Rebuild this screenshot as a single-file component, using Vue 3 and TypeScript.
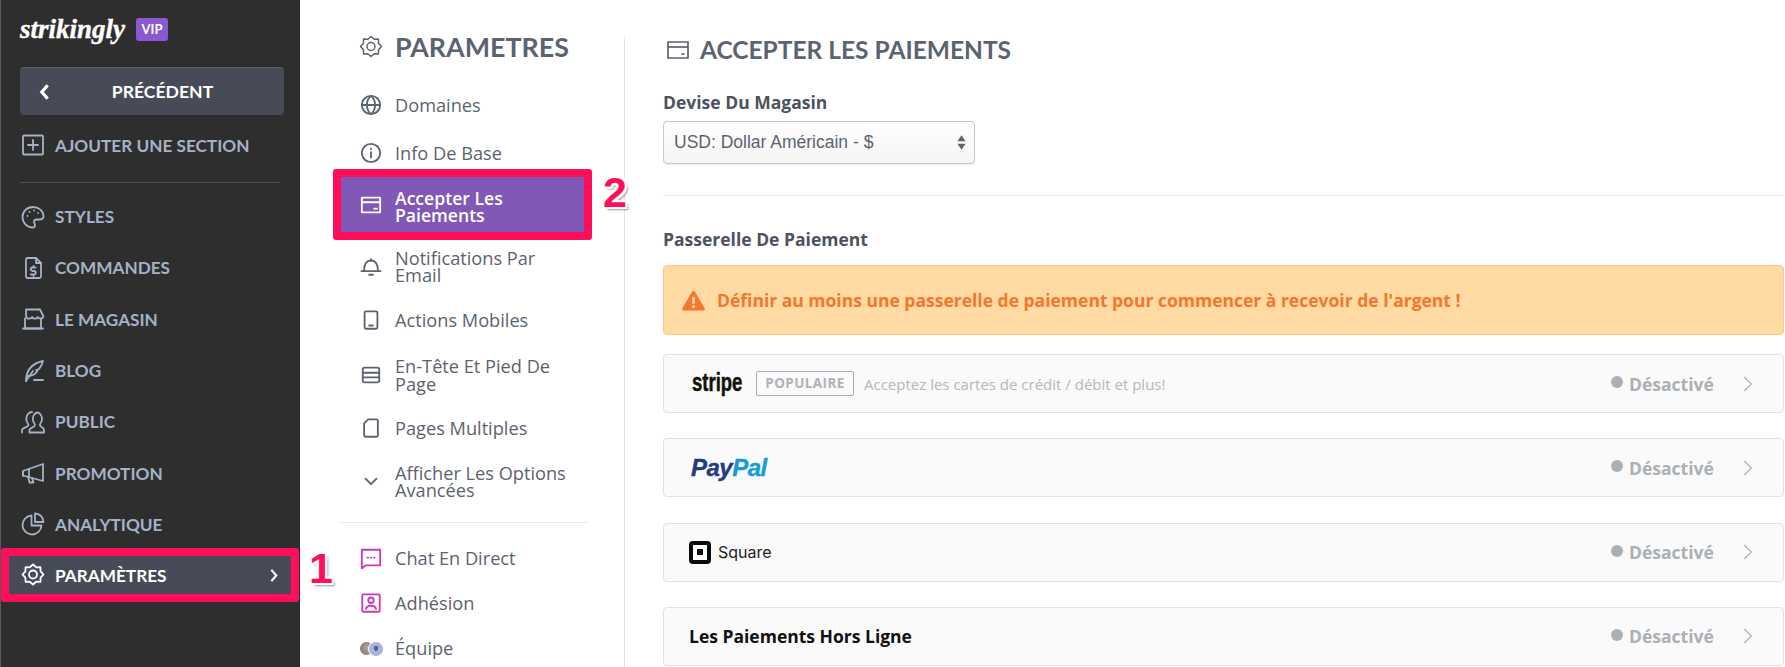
<script setup lang="ts">
const icons: Record<string, string[]> = {
  plus: ['M3 2.500h18a1 1 0 0 1 1 1v17a1 1 0 0 1-1 1H3a1 1 0 0 1-1-1v-17a1 1 0 0 1 1-1z', 'M12 7v10M7 12h10'],
  palette: ['M12 2C6 2 1.500 6.500 1.500 12S6 22.500 11.500 22.500c2 0 2.500-1 2.500-2.200 0-1.600-1-2-1-3.300 0-1.500 1.200-2.500 2.700-2.500h3.300c2 0 3.500-1.200 3.500-3.200C22.500 6 17.500 2 12 2z', 'M6.500 11h.01M8.500 7h.01M13 5.500h.01M17 8h.01'],
  invoice: ['M5 3.500A1.500 1.500 0 0 1 6.500 2H15l5 5v13.500a1.500 1.500 0 0 1-1.500 1.500h-12A1.500 1.500 0 0 1 5 20.500z', 'M15 2v5h5', 'M14.500 11.500h-3a1.500 1.500 0 0 0 0 3.500h1.500a1.500 1.500 0 0 1 0 3.500h-3.200M12.500 10v1.500M12.500 18.500V20'],
  store: ['M5 2.500h14l3.500 7c-.5 1.500-1.800 2.200-3 2.200s-2.300-.7-2.700-1.700c-.5 1-1.600 1.700-2.900 1.700s-2.400-.7-2.900-1.700c-.4 1-1.500 1.700-2.900 1.700-1.300 0-2.600-.7-3-2.200z', 'M4 11.500V21.500h16V11.500', 'M2 21.500h20'],
  feather: ['M5 22c0-9 4-17 17-20-1 4-2 6-4 8l-3 1 1.500 1c-2 3-5 5-9.500 5', 'M5 22l7-10', 'M13 21h9'],
  users: ['M1 22.500v-2.500c0-1.800 5-2.800 6-4 .6-.8.3-2-.4-3-.9-1.200-1.300-2.500-1.300-4C5.300 5 7.800 2 11 2', 'M8.500 22.500v-2.500c0-1.800 4-2.800 5-4 .6-.8.3-2-.4-3-.9-1.200-1.300-2.500-1.300-4 0-3.500 2.200-6.500 4.700-6.500S21 6 21 9c0 1.500-.4 2.800-1.300 4-.7 1-1 2.200-.4 3 .7 1 3.700 2 3.700 4v2.500z'],
  megaphone: ['M2 10l20-7v17L2 14.500z', 'M2 10.500V15', 'M7 15.500l1.500 6h4l-1.500-4.500', 'M8 8.500v7'],
  pie: ['M10.500 3.500A9.500 9.500 0 1 0 20.500 13.500H10.500z', 'M14 1.500a8.500 8.500 0 0 1 8.500 8.500H14z'],
  gear: ['M12 1.500l3.200 2.800 4.200-.2.200 4.200 2.900 3.200-2.900 3.200-.2 4.200-4.200-.2-3.200 2.800-3.200-2.800-4.200.2-.2-4.200L1.500 11.500l2.900-3.200.2-4.200 4.200.2z', 'M12 7.500a4 4 0 1 1 0 8 4 4 0 0 1 0-8z'],
  globe: ['M12 2a10 10 0 1 1 0 20 10 10 0 0 1 0-20z', 'M2 12h20', 'M12 2c3.500 3 4.500 6.500 4.500 10S15.500 19 12 22c-3.500-3-4.500-6.500-4.500-10S8.500 5 12 2z'],
  info: ['M12 2a10 10 0 1 1 0 20 10 10 0 0 1 0-20z', 'M12 11v6M12 7.200v.6'],
  card: ['M2 4h20v16H2z', 'M2 9h20', 'M15.500 16h3'],
  bell: ['M4.500 17c0-6 1-11 7.500-11s7.500 5 7.500 11', 'M1.500 17.500h21', 'M10 21.500h4', 'M12 6V4.500'],
  mobile: ['M6.500 2.500h11a1.500 1.500 0 0 1 1.500 1.500v16a1.500 1.500 0 0 1-1.500 1.500h-11A1.500 1.500 0 0 1 5 20V4a1.500 1.500 0 0 1 1.500-1.500z', 'M10 18h4'],
  layout: ['M5 4h14a2 2 0 0 1 2 2v12a2 2 0 0 1-2 2H5a2 2 0 0 1-2-2V6a2 2 0 0 1 2-2z', 'M3 9.500h18M3 14.500h18'],
  page: ['M9 2.500h9a1.500 1.500 0 0 1 1.500 1.500v16a1.500 1.500 0 0 1-1.500 1.500H6A1.500 1.500 0 0 1 4.500 20V7z'],
  down: ['M6 9.500l6 6 6-6'],
  chat: ['M2 3h20v17H6l-4 3.500z', 'M8 11.500h.8M11.600 11.500h.8M15.200 11.500h.8'],
  member: ['M3.500 2.500h17a1 1 0 0 1 1 1v17a1 1 0 0 1-1 1h-17a1 1 0 0 1-1-1v-17a1 1 0 0 1 1-1z', 'M12 6a3 3 0 1 1 0 6 3 3 0 0 1 0-6z', 'M6.500 18.500c.5-2.500 3-3.500 5.500-3.500s5 1 5.500 3.500'],
}
const side = [
  { t: 'STYLES', i: 'palette' }, { t: 'COMMANDES', i: 'invoice' }, { t: 'LE MAGASIN', i: 'store' },
  { t: 'BLOG', i: 'feather' }, { t: 'PUBLIC', i: 'users' }, { t: 'PROMOTION', i: 'megaphone' }, { t: 'ANALYTIQUE', i: 'pie' },
]
const nav = [
  { t: 'Domaines', i: 'globe', c: 'h48' }, { t: 'Info De Base', i: 'info', c: 'h48' },
  { t: 'Accepter Les Paiements', i: 'card', c: 'active' },
  { t: 'Notifications Par Email', i: 'bell', c: 'h68' }, { t: 'Actions Mobiles', i: 'mobile', c: 'h40' },
  { t: 'En-Tête Et Pied De Page', i: 'layout', c: 'h69' }, { t: 'Pages Multiples', i: 'page', c: 'h38' },
  { t: 'Afficher Les Options Avancées', i: 'down', c: 'h68' },
]
const gateways = ['stripe', 'paypal', 'square', 'offline']
</script>

<template>
  <div class="page">
    <aside class="side">
      <div class="brand">
        <span class="logo">strikingly</span>
        <span class="vip">VIP</span>
      </div>
      <button class="back">
        <svg class="back-chev" viewBox="0 0 12 20"><path d="M9.500 2.500L3 10l6.500 7.500" /></svg>
        <span>PRÉCÉDENT</span>
      </button>
      <div class="side-add">
        <svg class="ic" viewBox="0 0 24 24"><path v-for="d in icons.plus" :key="d" :d="d" /></svg>
        <span>AJOUTER UNE SECTION</span>
      </div>
      <div class="side-rule"></div>
      <div v-for="s in side" :key="s.t" class="side-row">
        <svg class="ic" viewBox="0 0 24 24"><path v-for="d in icons[s.i]" :key="d" :d="d" /></svg>
        <span>{{ s.t }}</span>
      </div>
      <div class="side-current">
        <svg class="ic" viewBox="0 0 24 24"><path v-for="d in icons.gear" :key="d" :d="d" /></svg>
        <span class="grow">PARAMÈTRES</span>
        <svg class="cur-chev" viewBox="0 0 12 20"><path d="M2.500 2.500L9 10l-6.500 7.500" /></svg>
      </div>
      <span class="mark mark-1">1</span>
    </aside>

    <nav class="settings">
      <div class="set-inner">
        <h2 class="set-title">
          <svg class="ic-h" viewBox="0 0 24 24"><path v-for="d in icons.gear" :key="d" :d="d" /></svg>
          PARAMETRES
        </h2>
        <div v-for="n in nav" :key="n.t" class="nav-row" :class="n.c">
          <svg class="ic-n" viewBox="0 0 24 24"><path v-for="d in icons[n.i]" :key="d" :d="d" /></svg>
          <span class="nav-text">{{ n.t }}</span>
        </div>
        <div class="nav-rule"></div>
        <div class="nav-row h45">
          <svg class="ic-n grad" viewBox="0 0 24 24">
            <defs><linearGradient id="gr1" gradientUnits="userSpaceOnUse" x1="0" y1="0" x2="24" y2="24"><stop offset="0" stop-color="#a93fd8" /><stop offset="1" stop-color="#f0309a" /></linearGradient></defs>
            <path v-for="d in icons.chat" :key="d" :d="d" stroke="url(#gr1)" />
          </svg>
          <span class="nav-text">Chat En Direct</span>
        </div>
        <div class="nav-row h45">
          <svg class="ic-n grad" viewBox="0 0 24 24">
            <defs><linearGradient id="gr2" gradientUnits="userSpaceOnUse" x1="0" y1="0" x2="24" y2="24"><stop offset="0" stop-color="#a93fd8" /><stop offset="1" stop-color="#f0309a" /></linearGradient></defs>
            <path v-for="d in icons.member" :key="d" :d="d" stroke="url(#gr2)" />
          </svg>
          <span class="nav-text">Adhésion</span>
        </div>
        <div class="nav-row h45">
          <span class="avatars"><i class="av av-a"></i><i class="av av-b"></i></span>
          <span class="nav-text">Équipe</span>
        </div>
        <span class="mark mark-2">2</span>
      </div>
    </nav>

    <main class="main">
      <h1 class="main-title">
        <svg class="ic-t" viewBox="0 0 24 24"><path v-for="d in icons.card" :key="d" :d="d" /></svg>
        ACCEPTER LES PAIEMENTS
      </h1>
      <div class="label first">Devise Du Magasin</div>
      <div class="select">
        <span>USD: Dollar Américain - $</span>
        <svg class="updown" viewBox="0 0 10 18"><path d="M5 1l4.500 6.500h-9zM5 17l-4.500-6.500h9z" /></svg>
      </div>
      <div class="main-rule"></div>
      <div class="label">Passerelle De Paiement</div>
      <div class="alert">
        <svg class="warn" viewBox="0 0 24 22"><path d="M12 1c.8 0 1.300.4 1.700 1l9.800 16.800c.7 1.300-.1 2.700-1.500 2.700H2c-1.400 0-2.200-1.400-1.500-2.700L10.300 2c.4-.6.900-1 1.700-1z" /><rect class="warn-b" x="10.600" y="7" width="2.800" height="7.500" rx="1" /><circle class="warn-b" cx="12" cy="17.300" r="1.700" /></svg>
        <span>Définir au moins une passerelle de paiement pour commencer à recevoir de l'argent !</span>
      </div>
      <div v-for="g in gateways" :key="g" class="gate">
        <div class="gate-left">
          <template v-if="g === 'stripe'">
            <span class="stripe-slot"><span class="stripe">stripe</span></span>
            <span class="pop">POPULAIRE</span>
            <span class="desc">Acceptez les cartes de crédit / débit et plus!</span>
          </template>
          <span v-else-if="g === 'paypal'" class="paypal"><b class="pp1">Pay</b><b class="pp2">Pal</b></span>
          <template v-else-if="g === 'square'">
            <span class="sq-box"><i class="sq-dot"></i></span>
            <span class="sq-text">Square</span>
          </template>
          <span v-else class="offline">Les Paiements Hors Ligne</span>
        </div>
        <i class="dot"></i>
        <span class="status">Désactivé</span>
        <svg class="gate-chev" viewBox="0 0 12 20"><path d="M1.500 1.500L10 10l-8.500 8.500" /></svg>
      </div>
    </main>
  </div>
</template>

<style>
html, body { margin: 0; background: #fff; }
</style>

<style scoped>
.page {
  position: relative;
  display: flex;
  width: 1785px;
  height: 667px;
  overflow: hidden;
  background: #fff;
  font-family: "Open Sans", "Liberation Sans", sans-serif;
}
/* sidebar */
.side {
  flex: 0 0 300px;
  box-sizing: border-box;
  background: #2e2e2e;
  border-left: 1px solid #5a5a5a;
  display: flex;
  flex-direction: column;
  font-family: Lato, "Liberation Sans", sans-serif;
  font-weight: 700;
  font-size: 17.200px;
  color: #a5b1c6;
}
.brand { display: flex; align-items: center; height: 67px; padding-left: 19px; gap: 11px; padding-bottom: 8px; box-sizing: border-box; }
.logo { font-family: "Liberation Serif", serif; font-style: italic; font-weight: 700; font-size: 27px; color: #fff; -webkit-text-stroke: .4px #fff; }
.vip { width: 32px; height: 23px; line-height: 23px; text-align: center; background: #8a58cf; color: #fff; border-radius: 3px; font-size: 13px; font-weight: 700; }
.back {
  margin: 0 0 0 19px; padding: 0; width: 264px; height: 48px; flex: none;
  display: flex; align-items: center;
  border: 0; border-top: 1px solid #5d616d; border-radius: 4px;
  background: #474b57; color: #fff;
  font: 700 17.600px Lato, "Liberation Sans", sans-serif;
}
.back span { width: 100%; text-align: center; margin-left: -19px; padding-left: 9px; box-sizing: border-box; }
.back-chev { width: 13px; height: 18px; flex: none; margin-left: 18px; fill: none; stroke: #fff; stroke-width: 3.500; }
.side-add { display: flex; align-items: center; gap: 10px; padding-left: 20px; height: 44px; margin-top: 8px; box-sizing: border-box; }
.side-rule { height: 1px; background: #4c505b; margin: 15px 19px 8px 19px; width: 260px; flex: none; }
.side-row { display: flex; align-items: center; gap: 10px; padding-left: 20px; height: 51.300px; flex: none; }
.ic { width: 24px; height: 24px; flex: none; fill: none; stroke: currentColor; stroke-width: 1.800; stroke-linejoin: round; stroke-linecap: round; }
.side-current {
  display: flex; align-items: center; gap: 10px;
  box-sizing: border-box; width: 298px; height: 54px; flex: none;
  margin-top: -2px;
  padding: 0 12px 0 12px;
  background: #474b57; border: 8px solid #ff0f5a; border-radius: 3px; color: #fff;
}
.grow { flex: 1; }
.cur-chev { width: 10px; height: 15px; fill: none; stroke: #fff; stroke-width: 3; }
/* annotations */
.mark {
  position: absolute;
  font-family: "Liberation Sans", sans-serif;
  font-weight: 700; font-size: 43px; line-height: 44px;
  color: #ff0f5a;
  text-shadow: 2px 0 0 #fff, -2px 0 0 #fff, 0 2px 0 #fff, 0 -2px 0 #fff, 2px 2px 0 #fff, -2px -2px 0 #fff, 2px -2px 0 #fff, -2px 2px 0 #fff, 3px 3px 2px #999;
}
.mark-1 { left: 309px; top: 546px; }
.mark-2 { left: 603px; top: 170px; }
/* settings column */
.settings { flex: 0 0 325px; box-sizing: border-box; padding-top: 37px; }
.set-inner { height: 630px; border-right: 1px solid #e2e3e5; box-sizing: border-box; }
.set-title {
  margin: 0; display: flex; align-items: center; gap: 12px; padding-left: 59px;
  padding-bottom: 24px; box-sizing: content-box; height: 20px;
  font: 700 26.800px/20px Lato, "Liberation Sans", sans-serif; color: #5c6370;
}
.ic-h { width: 24px; height: 24px; flex: none; fill: none; stroke: #5c6370; stroke-width: 1.500; stroke-linejoin: round; }
.nav-row {
  display: flex; align-items: center; gap: 13px; box-sizing: border-box;
  padding-left: 60px; width: 291px; color: #5c6370; font-size: 18.200px; line-height: 17.500px; font-weight: 500;
}
.nav-text { flex: 1; min-width: 0; padding: 2px 20px 0 0; }
.ic-n { width: 22px; height: 22px; flex: none; fill: none; stroke: #5c6370; stroke-width: 2; stroke-linejoin: round; stroke-linecap: round; }
.h48 { height: 48px; }
.h68 { height: 68px; }
.h69 { height: 69px; }
.h40 { height: 40px; }
.h38 { height: 38px; }
.h45 { height: 45px; }
.active {
  height: 71px; margin: -8px 0 -8px 33px; width: 259px;
  padding: 3px 10px 0 19px;
  background: #8158b6; border: 8px solid #ff0f5a; border-radius: 3px;
  color: #fff; font-weight: 600; font-size: 17.600px;
}
.active .nav-text { padding-right: 0; }
.active .ic-n { stroke: #fff; margin-top: -3px; }
.nav-rule { height: 1px; width: 250px; margin: 7px 0 12px 38px; background: #ebecee; }
.avatars { display: flex; width: 22px; height: 16px; flex: none; }
.av { display: block; border-radius: 50%; flex: none; }
.av-a { width: 13px; height: 13px; background: radial-gradient(circle at 60% 45%, #b5aca5, #6f6b68); margin-top: 2px; }
.av-b { width: 14px; height: 14px; background: radial-gradient(circle at 50% 45%, #59616e 0 22%, #aab4e2 24%); margin: 1px 0 0 -5px; border: 1px solid #fff; box-sizing: content-box; }
/* main */
.main { flex: 1; min-width: 0; box-sizing: border-box; padding: 37px 1px 0 38px; }
.main-title { margin: 0; height: 26px; display: flex; align-items: center; gap: 10px; padding-left: 3px; font: 700 24.500px/26px Lato, "Liberation Sans", sans-serif; color: #5c6370; }
.ic-t { width: 24px; height: 24px; flex: none; fill: none; stroke: #5c6370; stroke-width: 1.700; }
.label { font-weight: 700; font-size: 17.500px; line-height: 20px; color: #4c535e; }
.first { margin-top: 29px; }
.select {
  margin-top: 9px; width: 312px; height: 43px; box-sizing: border-box;
  display: flex; align-items: center; justify-content: space-between;
  padding: 0 8px 0 10px;
  border: 1px solid #c5c7ca; border-radius: 4px;
  background: linear-gradient(#fff, #f5f5f5);
  font: 17.500px "Liberation Sans", sans-serif; color: #5c6370;
  box-shadow: 0 1px 1px rgba(0,0,0,.08);
}
.updown { width: 9px; height: 17px; fill: #5c6370; margin-top: -1px; }
.main-rule { height: 1px; background: #e5e6e7; margin: 31px 0 33px; }
.alert {
  margin-top: 16px; height: 70px; box-sizing: border-box;
  display: flex; align-items: center; gap: 12px; padding-left: 18px;
  background: #ffdba3; border: 1px solid #fbc983; border-radius: 4px;
  color: #f4772e; font-weight: 700; font-size: 17.500px;
}
.warn { width: 23px; height: 21px; flex: none; fill: #f4772e; }
.warn-b { fill: #ffdba3; }
.gate {
  margin-top: 25.300px; height: 59px; box-sizing: border-box;
  display: flex; align-items: center;
  padding: 0 30px 0 25px;
  background: #fafafa; border: 1px solid #e2e2e2; border-radius: 4px;
}
.alert + .gate { margin-top: 19px; }
.gate-left { flex: 1; min-width: 0; display: flex; align-items: center; }
.stripe-slot { width: 52px; margin-left: 3px; flex: none; }
.stripe { display: inline-block; font: 700 25px/25px "Liberation Sans", sans-serif; color: #111; -webkit-text-stroke: .5px #111; transform: scaleX(.74); transform-origin: left center; margin-top: -2px; }
.pop { margin-left: 12px; width: 98px; height: 25px; line-height: 23px; box-sizing: border-box; text-align: center; border: 1px solid #a8adb2; border-radius: 2px; color: #aeb3b8; font-size: 13.500px; font-weight: 700; letter-spacing: .4px; }
.desc { margin-left: 10px; color: #b4b8bc; font-size: 15px; }
.paypal { font: italic 700 24px "Liberation Sans", sans-serif; margin-left: 2px; letter-spacing: -.5px; -webkit-text-stroke: .4px currentColor; }
.pp1 { color: #253b80; }
.pp2 { color: #179bd7; }
.sq-box { width: 22px; height: 23px; box-sizing: border-box; background: #fff; border: 4px solid #0a0a0a; border-radius: 4px; display: flex; align-items: center; justify-content: center; }
.sq-dot { display: block; width: 6px; height: 6px; background: #0a0a0a; }
.sq-text { margin-left: 7px; font: 16px Inter, "Liberation Sans", sans-serif; color: #222; }
.offline { font-weight: 700; font-size: 17.500px; color: #111; }
.dot { width: 12px; height: 12px; border-radius: 50%; background: #aab0b5; flex: none; margin-right: 6px; margin-top: -3px; }
.status { font-weight: 700; font-size: 17.500px; color: #aab0b5; width: 114px; }
.gate-chev { width: 10px; height: 18px; flex: none; fill: none; stroke: #b0b4b8; stroke-width: 1.600; }
</style>
